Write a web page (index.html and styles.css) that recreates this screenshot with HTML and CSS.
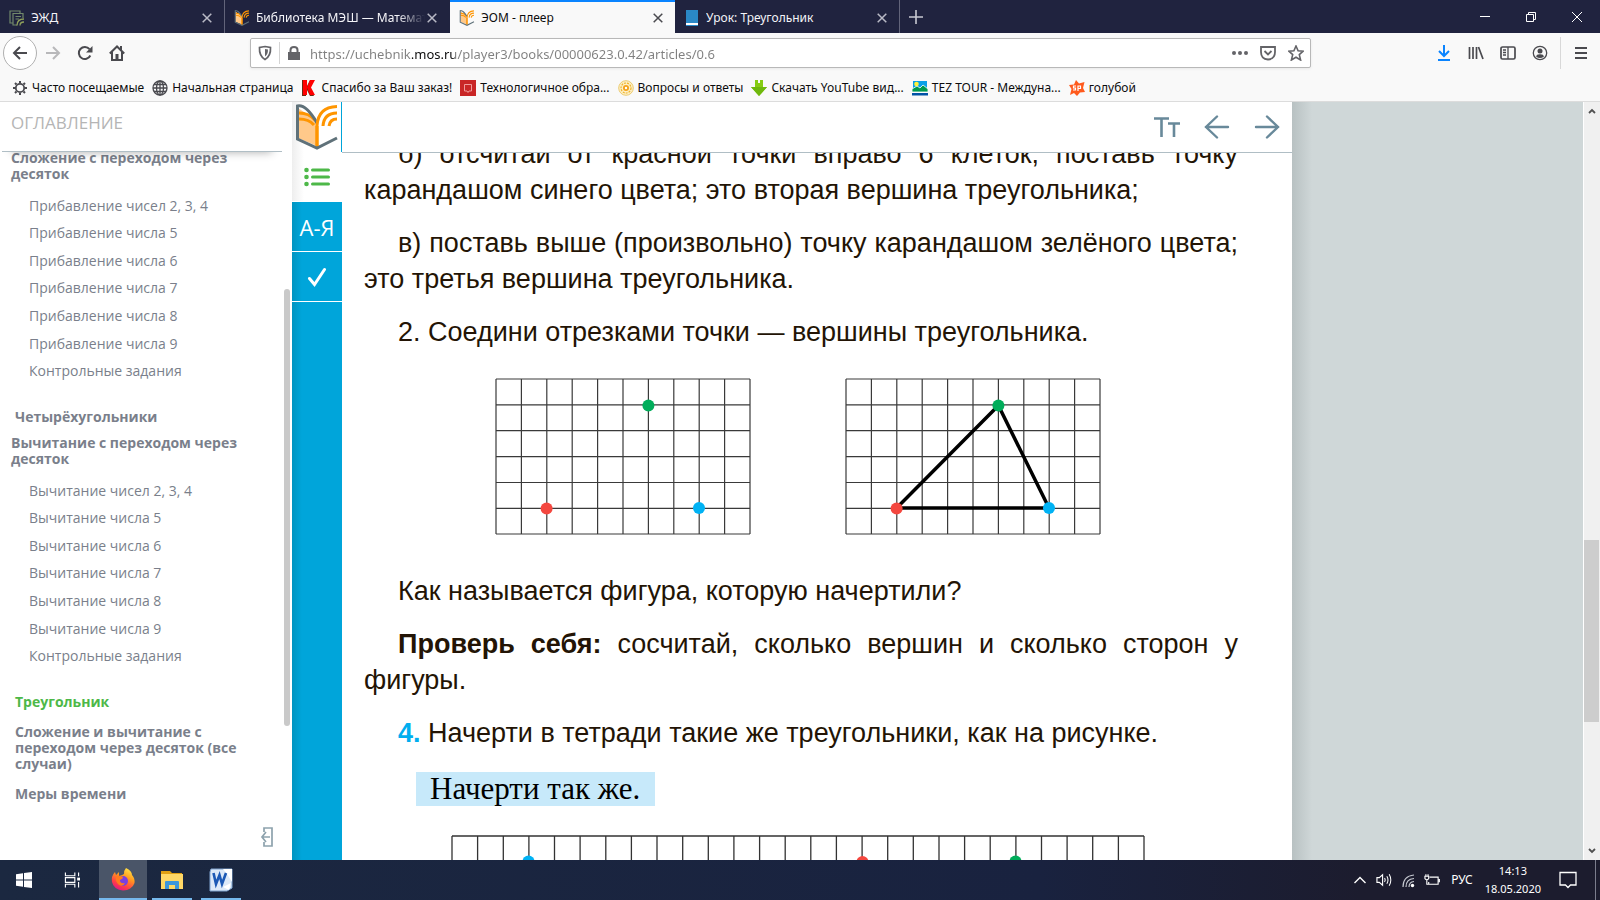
FILE: index.html
```
<!DOCTYPE html>
<html lang="ru">
<head>
<meta charset="utf-8">
<title>ЭОМ - плеер</title>
<link rel="stylesheet" href="styles.css">
</head>
<body>
<svg class="defs" aria-hidden="true">
  <symbol id="book" viewBox="0 0 42 46">
    <path d="M2 4 21 17V42L2 34Z" fill="#ffc98a"/>
    <path d="M3 9q10 0 16 7M3 15q10 0 15 6M21 43V22" fill="none" stroke="#ff9500" stroke-width="3"/>
    <path d="M21 19Q10 0 1.500 2V35L21 44 41 34" fill="none" stroke="#5f7179" stroke-width="3"/>
    <path d="M21 42V22Q22 3 41 2.500M27 22q1-13 14-13M33 22q1-7 8-7" fill="none" stroke="#ff9500" stroke-width="3"/>
  </symbol>
  <symbol id="cross" viewBox="0 0 10 10"><path d="M.7.7 9.300 9.300M9.300.7.7 9.300" fill="none" stroke="currentColor" stroke-width="1.500"/></symbol>
  <symbol id="grid" viewBox="0 0 256 157">
    <path d="M1 1H255M1 26.900H255M1 52.700H255M1 78.600H255M1 104.500H255M1 130.300H255M1 156H255M1 1V156M26.400 1V156M51.800 1V156M77.200 1V156M102.600 1V156M128 1V156M153.400 1V156M178.800 1V156M204.200 1V156M229.600 1V156M255 1V156" fill="none" stroke="#3a3a3a" stroke-width="1.200"/>
  </symbol>
  <symbol id="dots" viewBox="0 0 256 157">
    <circle cx="153.400" cy="27.500" r="6" fill="#00ad5a"/><circle cx="51.600" cy="130.500" r="6" fill="#f4473f"/><circle cx="204" cy="130" r="6" fill="#00b2f4"/>
  </symbol>
</svg>

<header class="browser">
  <div class="tabs">
    <div class="tab">
      <svg class="fav" viewBox="0 0 16 16"><path d="M4 13H1V1H11V3M8 15H4V3.500H14V8M6.500 6.500H12M6.500 9H10" fill="none" stroke="#71886b" stroke-width="1.200"/><path d="M8 15.500q0-6.500 7-6.500M11 15.500q0-3.500 4-3.500" fill="none" stroke="#8fa05b" stroke-width="1.300"/></svg>
      <span class="tab-title">ЭЖД</span><button class="close" aria-label="Закрыть"><svg><use href="#cross"/></svg></button>
    </div>
    <div class="tab">
      <svg class="fav"><use href="#book"/></svg>
      <span class="tab-title fade">Библиотека МЭШ — Математика</span><button class="close" aria-label="Закрыть"><svg><use href="#cross"/></svg></button>
    </div>
    <div class="tab active">
      <svg class="fav"><use href="#book"/></svg>
      <span class="tab-title">ЭОМ - плеер</span><button class="close" aria-label="Закрыть"><svg><use href="#cross"/></svg></button>
    </div>
    <div class="tab">
      <svg class="fav" viewBox="0 0 16 16"><path d="M2 0H14V16H2Z" fill="#2a88c6"/><path d="M2 13H14V15H2Z" fill="#fff"/></svg>
      <span class="tab-title">Урок: Треугольник</span><button class="close" aria-label="Закрыть"><svg><use href="#cross"/></svg></button>
    </div>
    <button class="newtab" aria-label="Новая вкладка"><svg viewBox="0 0 14 14"><path d="M7 0V14M0 7H14" stroke="currentColor" stroke-width="1.600"/></svg></button>
    <div class="winctl">
      <button aria-label="Свернуть"><svg viewBox="0 0 12 12"><path d="M1 5.500H11" stroke="#fff"/></svg></button>
      <button aria-label="Восстановить"><svg viewBox="0 0 12 12"><path d="M1.500 3.500H8.500V10.500H1.500ZM3.500 3.500V1.500H10.500V8.500H8.500" fill="none" stroke="#fff"/></svg></button>
      <button aria-label="Закрыть окно"><svg viewBox="0 0 12 12"><path d="M1 1 11 11M11 1 1 11" stroke="#fff"/></svg></button>
    </div>
  </div>

  <div class="nav">
    <button class="back" aria-label="Назад"><svg viewBox="0 0 16 16"><path d="M15 8H2M8 2 2 8 8 14" fill="none" stroke="currentColor" stroke-width="2"/></svg></button>
    <button class="navbtn dim" aria-label="Вперёд"><svg viewBox="0 0 16 16"><path d="M1 8H14M8 2 14 8 8 14" fill="none" stroke="currentColor" stroke-width="2"/></svg></button>
    <button class="navbtn" aria-label="Обновить"><svg viewBox="0 0 16 16"><path d="M12.500 4.200A6 6 0 1 0 13.300 10.500" fill="none" stroke="currentColor" stroke-width="2"/><path d="M15.500 1V7.500H9Z" fill="currentColor"/></svg></button>
    <button class="navbtn" aria-label="Домой"><svg viewBox="0 0 16 16"><path d="M.8 8.500 8 1.500 15.200 8.500M3 7V15H13V7" fill="none" stroke="currentColor" stroke-width="2"/><path d="M6.500 9H9.500V15H6.500ZM11 1H13V5H11Z" fill="currentColor"/></svg></button>
    <div class="url">
      <svg viewBox="0 0 16 16"><path d="M8 1.500 13.500 2.500Q14 11 8 14.500 2 11 2.500 2.500Z" fill="none" stroke="currentColor" stroke-width="1.700"/><path d="M8 4 11 4.600Q11 9.500 8 11.500Z" fill="currentColor"/></svg>
      <i class="sep"></i>
      <svg viewBox="0 0 16 16"><path d="M2 7H14V15H2Z" fill="currentColor"/><path d="M4.500 8V5Q4.500 2 8 2 11.500 2 11.500 5V8" fill="none" stroke="currentColor" stroke-width="2"/></svg>
      <input class="address" aria-label="Адрес" value="https://uchebnik.mos.ru/player3/books/00000623.0.42/articles/0.6">
      <button aria-label="Действия"><svg viewBox="0 0 16 16"><circle cx="2" cy="8" r="2" fill="currentColor"/><circle cx="8" cy="8" r="2" fill="currentColor"/><circle cx="14" cy="8" r="2" fill="currentColor"/></svg></button>
      <button aria-label="Pocket"><svg viewBox="0 0 16 16"><path d="M1 2H15V7Q15 14 8 14.500 1 14 1 7Z" fill="none" stroke="currentColor" stroke-width="1.800"/><path d="M4.500 6 8 9.500 11.500 6" fill="none" stroke="currentColor" stroke-width="1.800"/></svg></button>
      <button aria-label="В закладки"><svg viewBox="0 0 16 16"><path d="M8 1 10.100 5.800 15.200 6.200 11.300 9.600 12.600 15 8 12.200 3.400 15 4.700 9.600.8 6.200 5.900 5.800Z" fill="none" stroke="currentColor" stroke-width="1.600"/></svg></button>
    </div>
    <div class="tools">
      <button class="dl" aria-label="Загрузки"><svg viewBox="0 0 16 16"><path d="M8 0V11M3 6 8 11 13 6M2 15H14" fill="none" stroke="currentColor" stroke-width="2"/></svg></button>
      <button aria-label="Библиотека"><svg viewBox="0 0 16 16"><path d="M1.500 2V14M5 2V14M8.500 2V14M10.500 2 15 14" fill="none" stroke="currentColor" stroke-width="1.700"/></svg></button>
      <button aria-label="Боковая панель"><svg viewBox="0 0 16 16"><rect x="1" y="2" width="14" height="12" rx="1.500" fill="none" stroke="currentColor" stroke-width="1.700"/><path d="M8 2V14M3 5H6M3 7.500H6M3 10H6" stroke="currentColor" stroke-width="1.300"/></svg></button>
      <button aria-label="Аккаунт"><svg viewBox="0 0 16 16"><circle cx="8" cy="8" r="6.700" fill="none" stroke="currentColor" stroke-width="1.300"/><circle cx="8" cy="6" r="2.500" fill="currentColor"/><path d="M4 11.500Q4.500 9 8 9.200 11.500 9 12 11.500 8 14.500 4 11.500Z" fill="currentColor"/></svg></button>
      <i class="menusep"></i>
      <button aria-label="Меню"><svg viewBox="0 0 16 16"><path d="M2 3H14M2 8H14M2 13H14" stroke="currentColor" stroke-width="2"/></svg></button>
    </div>
  </div>

  <nav class="bookmarks">
    <a href="#"><svg viewBox="0 0 16 16"><circle cx="8" cy="8" r="4.200" fill="none" stroke="#4a4a4f" stroke-width="1.800"/><path d="M8 1V3M8 13V15M1 8H3M13 8H15M3 3 4.500 4.500M11.500 11.500 13 13M13 3 11.500 4.500M3 13 4.500 11.500" stroke="#4a4a4f" stroke-width="2"/></svg>Часто посещаемые</a>
    <a href="#"><svg viewBox="0 0 16 16"><g fill="none" stroke="#4a4a4f" stroke-width="1.300"><circle cx="8" cy="8" r="7"/><ellipse cx="8" cy="8" rx="3.500" ry="7"/><path d="M8 1V15M1 8H15M2 4.500H14M2 11.500H14"/></g></svg>Начальная страница</a>
    <a href="#"><svg viewBox="0 0 16 16"><path d="M1 0H5V16H1ZM5 8 9 0H13L9 8 13 16H9Z" fill="#6b2a12"/><path d="M2 0H6V15H2ZM6 7.500 9 0H14L10 7.500 14 15H9Z" fill="#f00"/></svg>Спасибо за Ваш заказ!</a>
    <a href="#"><svg viewBox="0 0 16 16"><path d="M0 0H16V16H0Z" fill="#c92626"/><path d="M4.500 4.500H11.500V11H9L8 12.500 7 11H4.500Z" fill="none" stroke="#f09a9a"/></svg>Технологичное обра...</a>
    <a href="#"><svg viewBox="0 0 16 16"><circle cx="8" cy="8" r="7.300" fill="#fdf0c8" stroke="#eccb70"/><circle cx="8" cy="8" r="5" fill="none" stroke="#f0b429" stroke-width="1.200" stroke-dasharray="2 1"/><circle cx="8" cy="8" r="3" fill="#f5a21a"/><circle cx="8" cy="8" r="1.200" fill="#fff"/></svg>Вопросы и ответы</a>
    <a href="#"><svg viewBox="0 0 16 16"><path d="M4 0H7V3H9V0H12V7H16L8 16 0 7H4Z" fill="#86cc13"/><path d="M0 7H16L8 16Z" fill="#6fb80d"/></svg>Скачать YouTube вид...</a>
    <a href="#"><svg viewBox="0 0 16 16"><path d="M1 1H15V11H1Z" fill="#0aa0e8"/><circle cx="4.500" cy="4" r="2.300" fill="#fff23a"/><path d="M0 9 5 6 8 8 11 5 16 9V12H0Z" fill="#009a4e" stroke="#fff" stroke-width=".8"/><path d="M0 13H16V15.500H0Z" fill="#0052a5"/></svg>TEZ TOUR - Междуна...</a>
    <a href="#"><svg viewBox="0 0 16 16"><path d="M7 0 10 3.500 15.500 2 14 8 16 12 11 12.500 8 16 5 13 1 15 2.500 9 0 5 5 4.500Z" fill="#ff5a1c"/><path d="M7 6H4.500V8H6.500V10H4M9 11V6H11.500V8.500H9" fill="none" stroke="#fff" stroke-width="1.200"/></svg>голубой</a>
  </nav>
</header>

<div class="page">
  <aside class="toc">
    <h2 class="toc-head">ОГЛАВЛЕНИЕ</h2>
    <nav class="toc-body">
      <div class="toc-list">
        <a class="section first" href="#">Сложение с переходом через десяток</a>
        <ul class="topics">
          <li><a href="#">Прибавление чисел 2, 3, 4</a></li>
          <li><a href="#">Прибавление числа 5</a></li>
          <li><a href="#">Прибавление числа 6</a></li>
          <li><a href="#">Прибавление числа 7</a></li>
          <li><a href="#">Прибавление числа 8</a></li>
          <li><a href="#">Прибавление числа 9</a></li>
          <li><a href="#">Контрольные задания</a></li>
        </ul>
        <a class="lesson lead" href="#">Четырёхугольники</a>
        <a class="section" href="#">Вычитание с переходом через десяток</a>
        <ul class="topics">
          <li><a href="#">Вычитание чисел 2, 3, 4</a></li>
          <li><a href="#">Вычитание числа 5</a></li>
          <li><a href="#">Вычитание числа 6</a></li>
          <li><a href="#">Вычитание числа 7</a></li>
          <li><a href="#">Вычитание числа 8</a></li>
          <li><a href="#">Вычитание числа 9</a></li>
          <li><a href="#">Контрольные задания</a></li>
        </ul>
        <a class="lesson lead current" href="#">Треугольник</a>
        <a class="lesson" href="#">Сложение и вычитание с переходом через десяток (все случаи)</a>
        <a class="lesson" href="#">Меры времени</a>
      </div>
      <i class="toc-thumb"></i>
      <button class="collapse" aria-label="Свернуть оглавление"><svg viewBox="0 0 14 20"><path d="M4 5V1H12V19H4V15M10 10H2M6 5 2 10 6 15" fill="none" stroke="#8da2ad" stroke-width="1.700"/></svg></button>
    </nav>
  </aside>

  <div class="rail">
    <a class="logo" href="#" aria-label="МЭШ"><svg><use href="#book"/></svg></a>
    <button class="rail-btn on" aria-label="Оглавление"><svg viewBox="0 0 26 20"><path d="M8.500 3H24.500M8.500 10H24.500M8.500 17H24.500" stroke="#4db848" stroke-width="3" stroke-linecap="round"/><circle cx="2.500" cy="3" r="2.300" fill="#4db848"/><circle cx="2.500" cy="10" r="2.300" fill="#4db848"/><circle cx="2.500" cy="17" r="2.300" fill="#4db848"/></svg></button>
    <button class="rail-btn">А-Я</button>
    <button class="rail-btn" aria-label="Проверка"><svg viewBox="0 0 26 20"><path d="M5.500 11.500 10.500 17.500 20.500 2.500" fill="none" stroke="#fff" stroke-width="3" stroke-linecap="round"/></svg></button>
  </div>

  <main class="reader">
    <div class="reader-bar">
      <button class="tt" aria-label="Размер текста"><svg viewBox="0 0 26 20"><path d="M0 1.500H15M7.500 1.500V20M14 6.500H26M20 6.500V20" fill="none" stroke="currentColor" stroke-width="2.600"/></svg></button>
      <button aria-label="Предыдущая"><svg viewBox="0 0 26 24"><path d="M24 12H2M13 1.500 2 12 13 22.500" fill="none" stroke="currentColor" stroke-width="2.400" stroke-linecap="round"/></svg></button>
      <button aria-label="Следующая"><svg viewBox="0 0 26 24"><path d="M2 12H24M13 1.500 24 12 13 22.500" fill="none" stroke="currentColor" stroke-width="2.400" stroke-linecap="round"/></svg></button>
    </div>
    <div class="reader-scroll">
      <article class="article">
        <p>б) отсчитай от красной точки вправо 6 клеток, поставь точку карандашом синего цвета; это вторая вершина треугольника;</p>
        <p>в) поставь выше (произвольно) точку карандашом зелёного цвета; это третья вершина треугольника.</p>
        <p>2. Соедини отрезками точки — вершины треугольника.</p>
        <div class="figures">
          <svg viewBox="0 0 256 157"><use href="#grid"/><use href="#dots"/></svg>
          <svg viewBox="0 0 256 157"><use href="#grid"/><path d="M51.600 130 153.400 27.500 204 130Z" fill="none" stroke="#000" stroke-width="3.500"/><use href="#dots"/></svg>
        </div>
        <p>Как называется фигура, которую начертили?</p>
        <p><b>Проверь себя:</b> сосчитай, сколько вершин и сколько сторон у фигуры.</p>
        <p><b class="num">4.</b> Начерти в тетради такие же треугольники, как на рисунке.</p>
        <div class="task">Начерти так же.</div>
        <svg class="widegrid" viewBox="0 0 694 60">
          <path d="M1 1H693M1 26.600H693M1 52.200H693M1 1V60M26.600 1V60M52.300 1V60M77.900 1V60M103.500 1V60M129.100 1V60M154.800 1V60M180.400 1V60M206 1V60M231.700 1V60M257.300 1V60M282.900 1V60M308.600 1V60M334.200 1V60M359.800 1V60M385.400 1V60M411.100 1V60M436.700 1V60M462.300 1V60M488 1V60M513.600 1V60M539.200 1V60M564.900 1V60M590.500 1V60M616.100 1V60M641.700 1V60M667.400 1V60M693 1V60" fill="none" stroke="#333" stroke-width="1.300"/>
          <circle cx="77.500" cy="26.500" r="6" fill="#00b2f4"/><circle cx="411.500" cy="27" r="6" fill="#f4473f"/><circle cx="564.500" cy="26.500" r="6" fill="#00ad5a"/>
        </svg>
      </article>
    </div>
  </main>
  <div class="gutter"></div>
  <div class="scrollbar">
    <svg viewBox="0 0 8 6"><path d="M1 5 4 2 7 5" fill="none" stroke="#505050" stroke-width="1.800"/></svg>
    <i class="thumb"></i>
    <svg viewBox="0 0 8 6"><path d="M1 1 4 4 7 1" fill="none" stroke="#505050" stroke-width="1.800"/></svg>
  </div>
</div>

<footer class="taskbar">
  <button class="app start" aria-label="Пуск"><svg viewBox="0 0 16 16"><path d="M0 2.300 7 1.300V7.500H0ZM8 1.100 16 0V7.500H8ZM0 8.500H7V14.700L0 13.700ZM8 8.500H16V16L8 14.900Z" fill="#fff"/></svg></button>
  <button class="app" aria-label="Представление задач"><svg viewBox="0 0 17 16"><path d="M1.500 0V3.500H11.500V0M1.500 16V12.500H11.500V16M1.500 5.500H11.500V10.500H1.500ZM15.500 0V4M15.500 10V16" fill="none" stroke="#fff" stroke-width="1.200"/><path d="M14 5.500H17V8.500H14Z" fill="#fff"/></svg></button>
  <button class="app focus" aria-label="Firefox"><svg class="big" viewBox="0 0 24 24">
    <defs><linearGradient id="fx" x1=".8" y1="0" x2=".3" y2="1"><stop offset="0" stop-color="#ffe94a"/><stop offset=".4" stop-color="#ff9a1f"/><stop offset=".75" stop-color="#ff3f45"/><stop offset="1" stop-color="#e31587"/></linearGradient></defs>
    <path d="M15 0q6 3 6 7 3 3 2.500 8A11.500 10 0 0 1 1 14Q0 8 4 4l1 3 3-3v4q4-1 5-2 0-4 2-6Z" fill="url(#fx)"/><circle cx="12" cy="13" r="5" fill="#7a3fe0"/><path d="M5 8q4-1 7 1 0 2-3 3 0 4 5 3-2 4-6 2-4-3-3-9Z" fill="#ff7a1e"/></svg></button>
  <button class="app run" aria-label="Проводник"><svg class="big" viewBox="0 0 24 24"><path d="M1 3H10L12 5H22V8H1Z" fill="#e0a013"/><path d="M1 6H23V21H1Z" fill="#ffd866"/><path d="M5 21V14Q5 13 6 13H18Q19 13 19 14V21H15V17H9V21Z" fill="#3d97dc"/></svg></button>
  <button class="app run" aria-label="Word"><svg class="big" viewBox="0 0 24 24"><path d="M2 1H23V20L18 23H1V4Z" fill="#dce9f8" stroke="#7ea3cf"/><path d="M14 1H23V14L18 6Z" fill="#fff"/><path d="M4.500 5 7 16 10.500 7 13 16 17 5" fill="none" stroke="#1c59b5" stroke-width="2.600"/><path d="M14 19 22 15 20 22Z" fill="#fff"/></svg></button>
  <div class="tray">
    <svg class="up" viewBox="0 0 12 8"><path d="M.5 7 6 1.500 11.500 7" fill="none" stroke="#fff" stroke-width="1.400"/></svg>
    <svg viewBox="0 0 17 16"><path d="M1 5.500H3.500L7 2.500V13.500L3.500 10.500H1Z" fill="none" stroke="#fff" stroke-width="1.200"/><path d="M9 6Q10.500 8 9 10M11.500 4Q14 8 11.500 12M14 2Q17.500 8 14 14" fill="none" stroke="#fff" stroke-width="1.100"/></svg>
    <svg viewBox="0 0 16 16"><path d="M3 15Q3 4 14 3M6 15Q6 7 14 6.500M9 15Q9 10 14 9.500" fill="none" stroke="#c5c8d0" stroke-width="1.200"/><circle cx="12.500" cy="13.500" r="1.700" fill="#fff"/></svg>
    <svg viewBox="0 0 17 16"><path d="M6 5H15V12.500H5V10M16.300 7V10.500M1 4H5V6.500Q3 9 1 6.500ZM2 2V4M4.300 2V4M3 8V12.500H5" fill="none" stroke="#fff" stroke-width="1.200"/></svg>
    <span class="lang">РУС</span>
    <div class="clock"><time>14:13</time><time>18.05.2020</time></div>
    <svg class="note" viewBox="0 0 18 18"><path d="M1 1.500H17V14H11.500L9 16.500 6.500 14H1Z" fill="none" stroke="#fff" stroke-width="1.300"/></svg>
    <i class="peek"></i>
  </div>
</footer>
</body>
</html>
```
FILE: styles.css
```
* { box-sizing: border-box; }
body {
  margin: 0;
  height: 100vh;
  display: flex;
  flex-direction: column;
  overflow: hidden;
  background: #fff;
  font: 12px/16px "Noto Sans", "Open Sans", sans-serif;
  color: #0c0c0d;
}
button { border: 0; padding: 0; background: none; color: inherit; font: inherit; display: grid; place-items: center; }
a { color: inherit; text-decoration: none; }
svg { display: block; flex: none; }
.defs { position: absolute; width: 0; height: 0; }

/* browser chrome */
.browser { flex: none; background: #f9f9f9; border-bottom: 1px solid #dcdcdc; }
.tabs { display: flex; height: 33px; background: #20233f; color: #f4f4f8; }
.tab {
  flex: 0 1 225px;
  min-width: 0;
  display: flex;
  align-items: center;
  gap: 6px;
  padding: 2px 12px 0 9px;
  border-right: 1px solid #62647a;
}
.tab:nth-child(2) { border-right-color: #20233f; }
.tab.active { background: #f9f9f9; color: #0c0c0d; border-top: 2px solid #0a84ff; border-right: 0; padding-top: 0; }
.fav { width: 16px; height: 16px; }
.tab-title { flex: 1; overflow: hidden; white-space: nowrap; }
.fade { margin-right: -4px; -webkit-mask-image: linear-gradient(90deg, #000 84%, transparent); mask-image: linear-gradient(90deg, #000 84%, transparent); }
.close { color: #b9bac6; }
.active .close { color: #4a4a4f; }
.close svg { width: 10px; height: 10px; }
.newtab { width: 32px; color: #c8c9d2; }
.newtab svg { width: 14px; height: 14px; }
.winctl { margin-left: auto; display: flex; }
.winctl button { width: 46px; }
.winctl svg { width: 12px; height: 12px; }

.nav { display: flex; align-items: center; height: 40px; padding: 0 3px 0 3px; color: #4a4a4f; }
.back { width: 34px; height: 34px; border: 1px solid #b0b0b0; border-radius: 50%; background: #fff; }
.navbtn { width: 32px; height: 32px; }
.dim { color: #b8b8ba; }
.nav svg { width: 16px; height: 16px; }
.url {
  flex: 1;
  height: 30px;
  margin: 0 117px 0 117px;
  padding: 0 0 0 6px;
  display: flex;
  align-items: center;
  background: #fff;
  border: 1px solid #b8b8b8;
  border-radius: 2px;
  box-shadow: 0 1px 3px #0001;
  color: #646468;
}
.sep { width: 1px; height: 22px; margin: 0 6px; background: #d4d4d4; }
.address {
  flex: 1;
  min-width: 0;
  margin-left: 8px;
  padding: 2px 0 0;
  border: 0;
  outline: 0;
  font: 13px/20px "Noto Sans", "Open Sans", sans-serif;
  color: transparent;
  background: linear-gradient(90deg, #808080 102px, #0c0c0d 102px, #0c0c0d 145px, #808080 145px);
  -webkit-background-clip: text;
  background-clip: text;
}
.url button { width: 28px; height: 28px; }
.tools { display: flex; align-items: center; }
.tools button { width: 32px; height: 32px; }
.tools .dl { color: #0a84ff; }
.menusep { width: 1px; height: 32px; margin: 0 4px; background: #d8d8d8; }

.bookmarks { display: flex; align-items: center; height: 28px; padding: 2px 12px 0; gap: 8px; }
.bookmarks a { display: flex; align-items: center; gap: 4px; white-space: nowrap; }
.bookmarks svg { width: 16px; height: 16px; }

/* page */
.page { flex: 1; min-height: 0; display: flex; background: #cfd7d8; }
.toc { flex: none; width: 292px; display: flex; flex-direction: column; background: #fff; color: #7a7f8b; }
.toc-head {
  z-index: 1;
  height: 50px;
  margin: 0 10px 0 2px;
  padding: 10px 9px;
  font: 17px/22px "Open Sans", "Noto Sans", sans-serif;
  color: #b5b5b5;
  background: #fff;
  border-bottom: 1px solid #b0bec5;
  box-shadow: 0 10px 10px -10px #0005;
}
.toc-body { position: relative; flex: 1; min-height: 0; overflow: hidden; font: 14px/16px "Open Sans", "Noto Sans", sans-serif; }
.toc-list { display: flex; flex-direction: column; margin-top: -2px; padding: 0 38px 0 11px; }
.section, .lesson { font-weight: 700; font-size: 14px; }
.section { margin-top: 10px; }
.first { margin-top: 0; }
.lesson { margin: 14px 0 0 4px; }
.lead { margin-top: 24px; }
.current { color: #4db848; }
.topics { display: grid; grid-auto-rows: 1fr; align-items: center; min-height: 193px; margin: 10px 0 0; padding: 0 0 0 18px; list-style: none; }
.toc-thumb { position: absolute; top: 137px; right: 2px; width: 6px; height: 437px; border-radius: 3px; background: #c9c9c9; }
.collapse { position: absolute; right: 18px; bottom: 13px; }
.collapse svg { width: 14px; height: 20px; }

.rail { flex: none; width: 50px; display: flex; flex-direction: column; background: linear-gradient(90deg, #0094c0, #00a5da 10px); }
.logo { height: 50px; display: grid; place-items: center; border-right: 1px solid #00a5da; background: linear-gradient(90deg, #eee, #fff 12px); }
.logo svg { width: 42px; height: 46px; }
.rail-btn { height: 50px; border-bottom: 1px solid #fff; color: #fff; font: 500 22px/32px "Open Sans", "Noto Sans", sans-serif; }
.rail-btn svg { width: 26px; height: 20px; }
.on { background: linear-gradient(90deg, #eee, #fff 12px); }

.reader { flex: 0 1 950px; min-width: 0; display: flex; flex-direction: column; background: #fff; }
.reader-bar { flex: none; height: 51px; display: flex; justify-content: flex-end; align-items: center; gap: 24px; padding-right: 12px; border-bottom: 1px solid #b0bec5; color: #68899a; }
.reader-bar svg { width: 26px; height: 24px; }
.reader-bar .tt svg { height: 20px; }
.reader-scroll { flex: 1; min-height: 0; overflow: hidden; }
.article { margin-top: -17px; padding: 0 54px 0 22px; font: 27px/36px "Liberation Sans", Arial, sans-serif; color: #231405; }
.article p { margin: 0 0 17px; text-indent: 34px; text-align: justify; }
.figures { display: flex; gap: 94px; margin: 28px 0 38px 131px; }
.figures svg { width: 256px; height: 157px; }
.num { color: #00aeef; }
.task { width: fit-content; margin: 21px 0 29px 52px; padding: 0 15px 0 14px; background: #c7e9fa; color: #000; font: 31px/34px "Liberation Serif", "Times New Roman", serif; }
.widegrid { width: 694px; height: 60px; margin-left: 87px; }

.gutter { flex: 1; background: linear-gradient(90deg, #b8c1c2, #cfd7d8 20px); }
.scrollbar { flex: none; width: 17px; display: flex; flex-direction: column; align-items: center; padding: 6px 1px 6px 0; border-left: 1px solid #fff; background: #f0f0f0; }
.scrollbar svg { width: 8px; height: 6px; }
.thumb { width: 15px; height: 182px; margin: auto 0 126px; background: #cdcdcd; }

/* taskbar */
.taskbar { flex: none; display: flex; height: 40px; background: linear-gradient(90deg, #1b2840, #19223f 65%, #1c1c2e 85%); color: #fff; }
.app { width: 48px; }
.app svg { width: 16px; height: 16px; }
.app .big { width: 24px; height: 24px; }
.app.focus { margin-left: 3px; padding-top: 2px; background: #4a5568; border-bottom: 2px solid #76b9ed; }
.app.run { width: 40px; margin: 0 4px 0 5px; padding-top: 2px; border-bottom: 2px solid #76b9ed; }
.tray { margin-left: auto; display: flex; align-items: center; gap: 8px; }
.tray svg { width: 16px; height: 16px; }
.tray .up { width: 12px; height: 8px; margin-right: 2px; }
.lang { margin-left: 3px; }
.clock { display: flex; flex-direction: column; align-items: center; font-size: 11px; line-height: 18px; margin-left: 4px; }
.tray .note { width: 18px; height: 18px; margin: 0 10px; }
.peek { width: 1px; height: 40px; margin-right: 4px; background: #7b7d8c; }
```
